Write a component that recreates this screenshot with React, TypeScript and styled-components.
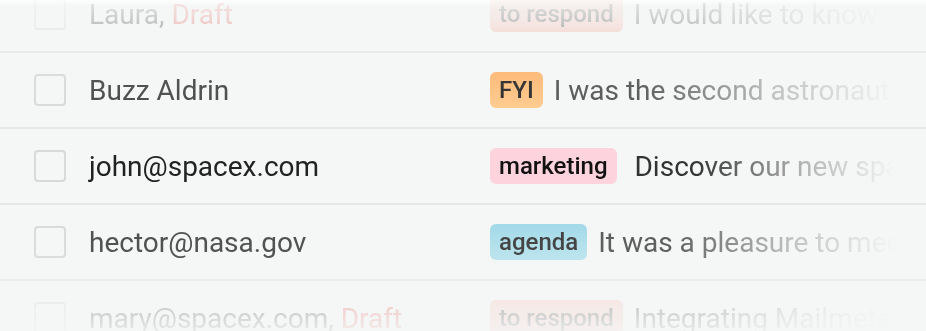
import styled, { createGlobalStyle } from "styled-components";

const GlobalStyle = createGlobalStyle`
  html, body {
    margin: 0;
    padding: 0;
  }
  body {
    background: linear-gradient(to bottom, #fdfdfd 0, #f5f6f6 6px) #f5f6f6 no-repeat;
    font-family: Roboto, "Liberation Sans", sans-serif;
    -webkit-font-smoothing: antialiased;
  }
`;

type TagKind = "respond" | "fyi" | "marketing" | "agenda";

const tagStyles: Record<TagKind, { bg: string; color: string }> = {
  respond: { bg: "linear-gradient(to bottom, #f9cdc3, #f5bcb0)", color: "#444" },
  fyi: { bg: "linear-gradient(to bottom, #fdb670, #ffca8d)", color: "#2a2a2a" },
  marketing: { bg: "#fdd4de", color: "#111" },
  agenda: { bg: "linear-gradient(to bottom, #9fd8e7, #b8e3ed)", color: "#3a3a3a" },
};

const emails: {
  sender: string;
  draft?: boolean;
  tag: TagKind;
  label: string;
  preview: string;
  focus?: boolean;
}[] = [
  { sender: "Laura,", draft: true, tag: "respond", label: "to respond", preview: "I would like to know more" },
  { sender: "Buzz Aldrin", tag: "fyi", label: "FYI", preview: "I was the second astronaut to walk" },
  { sender: "john@spacex.com", tag: "marketing", label: "marketing", preview: " Discover our new spaceship", focus: true },
  { sender: "hector@nasa.gov", tag: "agenda", label: "agenda", preview: "It was a pleasure to meet you" },
  { sender: "mary@spacex.com,", draft: true, tag: "respond", label: "to respond", preview: "Integrating Mailmeteor with" },
];

export default function App() {
  return (
    <>
      <GlobalStyle />
      <Viewport>
        <List>
          {emails.map((e) => (
            <Row key={e.sender}>
              <Checkbox />
              <Sender $focus={!!e.focus}>
                {e.sender}
                {e.draft && <Draft> Draft</Draft>}
              </Sender>
              <Message>
                <Tag $kind={e.tag}>{e.label}</Tag>
                <Preview $focus={!!e.focus}>{e.preview}</Preview>
              </Message>
            </Row>
          ))}
        </List>
      </Viewport>
    </>
  );
}

// soft fade at the top and bottom edges of the list
const fade = `linear-gradient(
  to bottom,
  rgba(0, 0, 0, 0.1) 0%,
  rgba(0, 0, 0, 0.28) 7%,
  rgba(0, 0, 0, 0.92) 20%,
  #000 40%,
  #000 60%,
  rgba(0, 0, 0, 0.92) 80%,
  rgba(0, 0, 0, 0.28) 92%,
  rgba(0, 0, 0, 0.08) 100%
)`;

const Viewport = styled.div`
  height: 331px;
  overflow: hidden;
  -webkit-mask-image: ${fade};
  mask-image: ${fade};
`;

const List = styled.div`
  margin-top: -23px;
`;

const Row = styled.div`
  box-sizing: border-box;
  height: 76px;
  display: flex;
  align-items: center;
  padding: 0 31px 0 34px;
  border-bottom: 2px solid #e6e7e9;
`;

const Checkbox = styled.span`
  box-sizing: border-box;
  flex: none;
  width: 32px;
  height: 32px;
  margin-right: 23px;
  border: 2.5px solid #d9d9d9;
  border-radius: 4px;
`;

const Sender = styled.div<{ $focus: boolean }>`
  flex: none;
  width: 401px;
  font-size: 28px;
  color: ${({ $focus }) => ($focus ? "#222" : "#484848")};
  white-space: nowrap;
`;

const Draft = styled.span`
  color: #e2685f;
`;

const Message = styled.div`
  flex: 1;
  min-width: 0;
  display: flex;
  align-items: center;
  gap: 11px;
`;

const Tag = styled.span<{ $kind: TagKind }>`
  flex: none;
  height: 36px;
  line-height: 36px;
  padding: 0 9px;
  border-radius: 6px;
  font-size: 24px;
  font-weight: 500;
  background: ${({ $kind }) => tagStyles[$kind].bg};
  color: ${({ $kind }) => tagStyles[$kind].color};
`;

const Preview = styled.div<{ $focus: boolean }>`
  flex: 1;
  min-width: 0;
  overflow: hidden;
  white-space: pre;
  font-size: 28px;
  color: ${({ $focus }) => ($focus ? "#333" : "#555")};
  -webkit-mask-image: linear-gradient(to right, #000 25%, rgba(0, 0, 0, 0.35) 65%, transparent 100%);
  mask-image: linear-gradient(to right, #000 25%, rgba(0, 0, 0, 0.35) 65%, transparent 100%);
`;
